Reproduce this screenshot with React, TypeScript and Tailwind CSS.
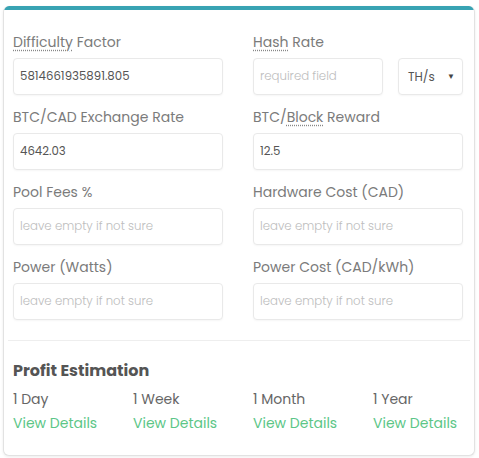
import React from "react";

const font = { fontFamily: '"Poppins", "Open Sans", "Liberation Sans", sans-serif' };

function Label({ children }: { children: React.ReactNode }) {
  return <label className="block h-[21px] text-[14px] leading-[21px] text-[#7b7b7b]">{children}</label>;
}

function Dotted({ children }: { children: React.ReactNode }) {
  return <span className="underline decoration-dotted decoration-[#888] underline-offset-[3px]">{children}</span>;
}

function Field({ value, placeholder }: { value?: string; placeholder?: string }) {
  return (
    <input
      defaultValue={value}
      placeholder={placeholder}
      className="mt-[5px] h-[37px] w-full rounded-[4px] border border-[#e9e9e9] bg-white px-[6px] text-[11.75px] text-[#555] shadow-[0_1px_2px_rgba(0,0,0,0.04)] outline-none placeholder:font-light placeholder:text-[#bdbdbd]"
    />
  );
}

const periods = ["1 Day", "1 Week", "1 Month", "1 Year"];

export default function App() {
  return (
    <div className="h-[458px] w-[479px] bg-white pl-[3px] pt-[6px]" style={font}>
      <div className="h-[450px] w-[472px] overflow-hidden rounded-[6px] border-x border-b border-[#e2e2e2] bg-white shadow-[0_1px_3px_rgba(0,0,0,0.08)]">
        <div className="h-[4px] bg-[#38a3b3]" />
        <div className="px-[9px] pt-[22px] pb-[20px]">
          <div className="grid grid-cols-[210px_210px] gap-x-[30px] gap-y-[12px]">
            <div>
              <Label>
                <Dotted>Difficulty</Dotted> Factor
              </Label>
              <Field value="5814661935891.805" />
            </div>
            <div>
              <Label>
                <Dotted>Hash</Dotted> Rate
              </Label>
              <div className="flex gap-[15px]">
                <Field placeholder="required field" />
                <div className="mt-[5px] flex h-[37px] w-[65px] shrink-0 items-center justify-between rounded-[4px] border border-[#e9e9e9] bg-white pl-[9px] pr-[7px] text-[12px] text-[#555] shadow-[0_1px_2px_rgba(0,0,0,0.04)]">
                  <span>TH/s</span>
                  <span className="text-[8px] text-[#444]">▼</span>
                </div>
              </div>
            </div>
            <div>
              <Label>BTC/CAD Exchange Rate</Label>
              <Field value="4642.03" />
            </div>
            <div>
              <Label>
                BTC/<Dotted>Block</Dotted> Reward
              </Label>
              <Field value="12.5" />
            </div>
            <div>
              <Label>Pool Fees %</Label>
              <Field placeholder="leave empty if not sure" />
            </div>
            <div>
              <Label>Hardware Cost (CAD)</Label>
              <Field placeholder="leave empty if not sure" />
            </div>
            <div>
              <Label>Power (Watts)</Label>
              <Field placeholder="leave empty if not sure" />
            </div>
            <div>
              <Label>Power Cost (CAD/kWh)</Label>
              <Field placeholder="leave empty if not sure" />
            </div>
          </div>
        </div>
        <div className="mx-[4px] h-px bg-[#eeeeee]" />
        <div className="px-[9px] pt-[19px]">
          <h3 className="text-[16px] font-bold leading-[22px] text-[#555]">Profit Estimation</h3>
          <div className="mt-[7px] flex">
            {periods.map((p) => (
              <div key={p} className="w-[120px] shrink-0">
                <p className="text-[14px] leading-[20px] text-[#666]">{p}</p>
                <a href="#" className="mt-[4px] block text-[14px] leading-[20px] text-[#5cc687]">
                  View Details
                </a>
              </div>
            ))}
          </div>
        </div>
      </div>
    </div>
  );
}
